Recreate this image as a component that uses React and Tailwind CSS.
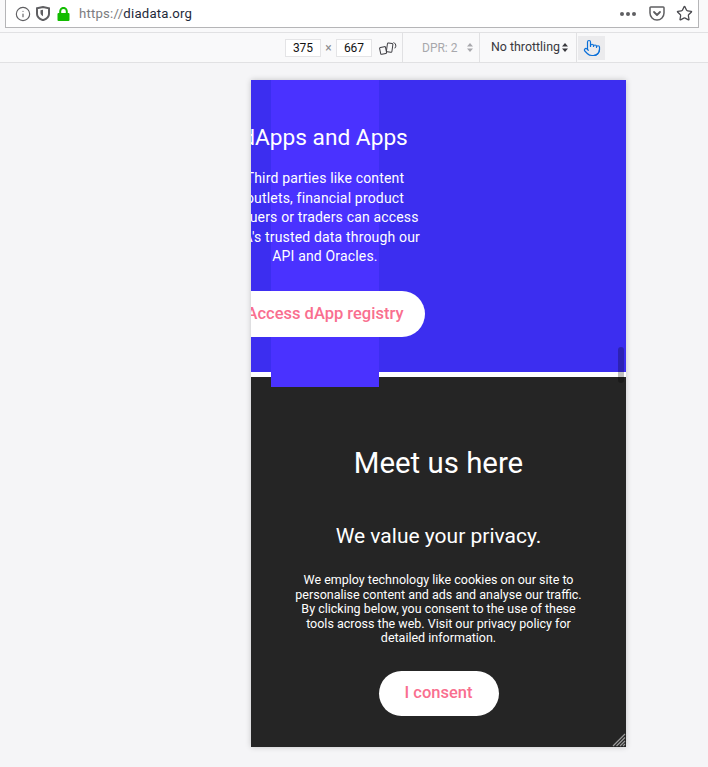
import { Info, Star, Pointer } from 'lucide-react';

function ShieldIcon() {
  return (
    <svg width="14" height="15" viewBox="0 0 14 15" fill="none">
      <path d="M1 2.2 7 1l6 1.2V8c0 3-2.6 5-6 6.2C3.6 13 1 11 1 8V2.2Z" stroke="#5f5f62" strokeWidth="2" />
      <path d="M4.5 4.2 7 3.7v6.5C5.5 9.4 4.5 8.4 4.5 7V4.2Z" fill="#5f5f62" />
    </svg>
  );
}

function LockIcon() {
  return (
    <svg width="13" height="14" viewBox="0 0 13 14" fill="none">
      <path d="M3.2 6.5V4.2a3.300 3.300 0 0 1 6.600 0v2.300" stroke="#12bc00" strokeWidth="2" />
      <rect x="0.500" y="6" width="12" height="8" rx="1" fill="#12bc00" />
    </svg>
  );
}

function PocketIcon() {
  return (
    <svg width="16" height="15" viewBox="0 0 16 15" fill="none">
      <path d="M1.8 1h12.4c.5 0 .8.3.8.8V7c0 3.800-3.100 7-7 7s-7-3.200-7-7V1.800c0-.5.3-.8.800-.8Z" stroke="#5f5f62" strokeWidth="1.500" />
      <path d="m5 6 3 3 3-3" stroke="#5f5f62" strokeWidth="1.800" strokeLinecap="round" strokeLinejoin="round" />
    </svg>
  );
}

function RotateIcon() {
  return (
    <svg width="18" height="14" viewBox="0 0 18 14" fill="none" stroke="#3f3f44" strokeWidth="1">
      <rect x="1" y="6" width="6" height="7" rx="1" transform="rotate(-12 4 9)" />
      <rect x="8" y="2" width="5.500" height="9" rx="1" transform="rotate(8 10 6)" />
      <path d="M14.500 1.500c1.500.5 2.500 2 2.300 3.800l-1 2" />
    </svg>
  );
}

function Arrows({ color }) {
  return (
    <svg width="6" height="9" viewBox="0 0 6 9" fill={color}>
      <path d="M3 0 6 3.500H0L3 0ZM3 9 0 5.500h6L3 9Z" />
    </svg>
  );
}

function AddressBar() {
  return (
    <div className="h-[33px] border-b border-[#e1e1e3] bg-[#f9f9fa]">
      <div className="ml-[5px] mr-[9px] flex h-[28px] items-center border-x border-b border-[#b5b5b7] bg-white pl-[9px] pr-[5px]">
        <Info size={16} color="#5f5f62" strokeWidth={1.700} />
        <span className="ml-[5px] flex"><ShieldIcon /></span>
        <span className="ml-[7px] flex"><LockIcon /></span>
        <span className="ml-[9px] text-[13.200px] tracking-[0.2px] text-[#7c7c80]">
          https://<span className="text-[#1e2a3a]">diadata.org</span>
        </span>
        <div className="ml-auto flex items-center">
          <span className="flex gap-[2px]">
            <i className="h-[4px] w-[4px] rounded-full bg-[#5f5f62]" />
            <i className="h-[4px] w-[4px] rounded-full bg-[#5f5f62]" />
            <i className="h-[4px] w-[4px] rounded-full bg-[#5f5f62]" />
          </span>
          <span className="ml-[13px] flex"><PocketIcon /></span>
          <Star size={17} color="#4a4a4f" strokeWidth={1.800} className="ml-[11px]" />
        </div>
      </div>
    </div>
  );
}

function DeviceToolbar() {
  return (
    <div className="flex h-[30px] items-center whitespace-nowrap border-b border-[#e1e1e3] bg-[#f9f9fa] pl-[285px] text-[12px] text-[#38383d]">
      <span className="flex h-[18px] w-[36px] items-center justify-center border border-[#e4e4e6] bg-white text-[#111]">375</span>
      <span className="w-[15px] text-center text-[#8a8a8e]">×</span>
      <span className="flex h-[18px] w-[36px] items-center justify-center border border-[#e4e4e6] bg-white text-[#111]">667</span>
      <span className="ml-[7px] flex"><RotateIcon /></span>
      <span className="ml-[5px] h-[29px] w-px bg-[#e1e1e3]" />
      <span className="ml-[19px] w-[36px] text-[#a8a8ac]">DPR: 2</span>
      <span className="ml-[9px] flex"><Arrows color="#a8a8ac" /></span>
      <span className="ml-[6px] h-[29px] w-px bg-[#e1e1e3]" />
      <span className="ml-[11px] w-[71px] text-[12.400px]">No throttling</span>
      <span className="flex"><Arrows color="#38383d" /></span>
      <span className="ml-[8px] h-[29px] w-px bg-[#e1e1e3]" />
      <span className="ml-[1px] flex h-[24px] w-[27px] items-center justify-center bg-[#ebebed]">
        <Pointer size={18} color="#0a6fd8" strokeWidth={1.600} />
      </span>
    </div>
  );
}

function BlueSection() {
  return (
    <section className="relative h-[292px] bg-[#3c2ef0] text-white">
      <div className="absolute left-[20px] top-0 h-[307px] w-[108px] bg-[#4a32ff]" />
      <div className="relative -ml-[26px] flex w-[200px] flex-col items-center pt-[42px] text-center">
        <h2 className="whitespace-nowrap text-[22.700px] leading-[32px]">dApps and Apps</h2>
        <p className="mt-[15px] whitespace-nowrap text-[14px] leading-[19.600px] tracking-[0.17px]">
          Third parties like content
          <br />
          outlets, financial product
          <br />
          issuers or traders can access
          <br />
          DIA's trusted data through our
          <br />
          API and Oracles.
        </p>
        <button className="mt-[24px] flex h-[46px] w-[200px] items-center justify-center whitespace-nowrap rounded-full bg-white text-[16.500px] font-medium text-[#f96f8f]">
          Access dApp registry
        </button>
      </div>
    </section>
  );
}

function PrivacySection() {
  return (
    <section className="flex h-[370px] flex-col items-center bg-[#252525] pt-[67px] text-center text-white">
      <h2 className="text-[29.400px] leading-[38px]">Meet us here</h2>
      <h3 className="mt-[40px] text-[21px] leading-[28px]">We value your privacy.</h3>
      <p className="mt-[23px] w-[300px] text-[12.500px] leading-[14.600px]">
        We employ technology like cookies on our site to personalise content and ads and analyse our traffic. By clicking below, you consent to the use of these tools across the web. Visit our privacy policy for detailed information.
      </p>
      <button className="mt-[25px] h-[45px] w-[120px] rounded-full bg-white text-[16.500px] font-medium text-[#f96f8f]">I consent</button>
    </section>
  );
}

function ResizeGrip() {
  return (
    <svg className="absolute bottom-0 right-0" width="14" height="14" viewBox="0 0 14 14" stroke="#9a9a9a" strokeWidth="1.200">
      <path d="M1 13 13 1M4.500 13 13 4.500M8 13l5-5M11 13l2-2" />
    </svg>
  );
}

export default function App() {
  return (
    <div className="h-[767px] w-[708px] overflow-hidden bg-[#f5f5f7] [font-family:Roboto,sans-serif]">
      <AddressBar />
      <DeviceToolbar />
      <div className="relative ml-[251px] mt-[17px] h-[667px] w-[375px] shadow-[0_0_6px_rgba(0,0,0,0.2)]">
        <div className="h-full overflow-hidden">
          <BlueSection />
          <div className="h-[5px] bg-white" />
          <PrivacySection />
        </div>
        <div className="absolute left-[367px] top-[267px] h-[36px] w-[6px] rounded-full bg-black/25" />
        <ResizeGrip />
      </div>
    </div>
  );
}
